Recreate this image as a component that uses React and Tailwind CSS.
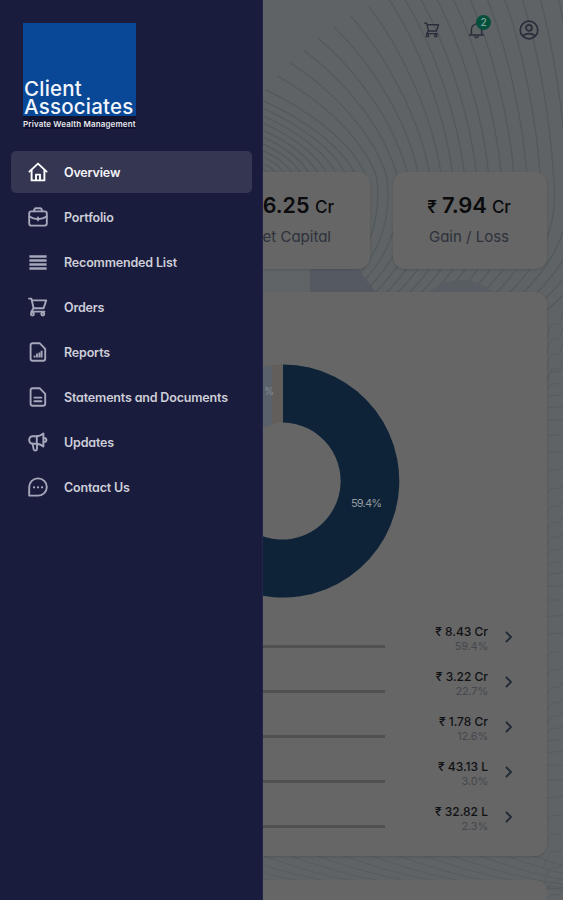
import React from "react";

const stroke = { fill: "none", stroke: "currentColor", strokeLinecap: "round", strokeLinejoin: "round" };

function Icon({ size = 20, width = 1.9, children, className = "" }) {
  return (
    <svg width={size} height={size} viewBox="0 0 20 20" strokeWidth={width} className={"shrink-0 " + className} {...stroke}>
      {children}
    </svg>
  );
}

const cartShape = (
  <>
    <path d="M1 1.6h2.4l2.2 9.6h10L18.2 3.4H4" />
    <path d="M5.6 11.2 3.4 14.6h13" />
    <circle cx="4.4" cy="17" r="1.5" />
    <circle cx="14.8" cy="17" r="1.5" />
  </>
);

const menu = [
  { label: "Overview", icon: <><path d="M1.4 9.6 10 1.6l8.6 8" /><path d="M3.6 8v10.4h12.8V8" /><path d="M8 18.2v-5.6h4v5.6" /></> },
  { label: "Portfolio", icon: <><rect x="1.2" y="4.4" width="17.6" height="14.2" rx="2" /><path d="M6 4.200c0-2 .8-3 2-3h4c1.2 0 2 1 2 3" /><path d="M1.400 9.600c2.400 1.800 5.200 2.600 8.600 2.600s6.200-.8 8.600-2.600M10 10.400v3" /></> },
  { label: "Recommended List", icon: <path d="M1.400 4.500h17.200M1.400 8.500h17.200M1.400 12.500h17.200M1.400 16.500h17.200" strokeLinecap="butt" strokeWidth="2.400" /> },
  { label: "Orders", icon: cartShape },
  { label: "Reports", icon: <><path d="M4.600 1.200h7l5.600 5.600v10q0 2-2 2H4.600q-2 0-2-2V3.200q0-2 2-2z" /><path d="M6.600 15.600v-2.200M9 15.600v-4M11.400 15.600v-5M13.600 15.600V8.800" strokeLinecap="butt" /></> },
  { label: "Statements and Documents", icon: <><path d="M4.600 1.200h7l5.600 5.600v10q0 2-2 2H4.600q-2 0-2-2V3.200q0-2 2-2z" /><path d="M6.400 10.600h7M6.400 14.200h7" /></> },
  { label: "Updates", icon: <><path d="M15.400 1.400v13.200c-2-1.900-4.300-2.900-7.400-2.900H4.600a3.400 3.400 0 0 1-3.400-3.400V7.700a3.400 3.400 0 0 1 3.400-3.400H8c3.100 0 5.400-1 7.400-2.900z" /><path d="M8.800 4.400v7.200M15.600 6c3.800 0 3.800 4 0 4M4.600 11.800l1 5.400q.4 1.400 1.600 1.400c1.400 0 1.800-.8 1.800-2v-4.600" /></> },
  { label: "Contact Us", icon: <><path d="M1.200 18.600V10a8.800 8.600 0 1 1 8.800 8.600z" /><path d="M6 10.300h.1M10 10.300h.1M14 10.300h.1" strokeWidth="2.200" /></> },
];

const holdings = [
  ["₹ 8.43 Cr", "59.4%"],
  ["₹ 3.22 Cr", "22.7%"],
  ["₹ 1.78 Cr", "12.6%"],
  ["₹ 43.13 L", "3.0%"],
  ["₹ 32.82 L", "2.3%"],
];

// Each contour is named by the x it crosses behind the cards; its start slides
// up the left edge, over the outer arc and then along the top.
function contourStart(x) {
  if (x < 100) return [-2, 175 - 0.8 * x];
  if (x < 190) {
    const t = (x - 100) / 90;
    return [-2 + 100 * t + 27 * t * t, 95 - 130 * t + 33 * t * t];
  }
  return [125 + (x - 190) * 1.33, -2];
}

const contours = Array.from({ length: 38 }, (_, i) => {
  const x = 8 + i * 7.5 + i * i * 0.11;
  const [sx, sy] = contourStart(x);
  const dx = x - sx;
  return `M${sx} ${sy}C${sx + dx * 0.45} ${sy + (175 - sy) * 0.25} ${x - dx * 0.12} ${sy + (175 - sy) * 0.65} ${x} 178C${x + 5} 225 ${x - 8} 262 ${x - 62} 310`;
});

// Slanted, slowly turning lines in the narrow strip beside the main card.
const edgeWaves = Array.from({ length: 40 }, (_, i) => {
  const y = 300 + i * 15;
  const rise = i < 4 ? 60 : 16 + Math.sin(i * 0.55) * 16;
  return `M280 ${y + rise}q6 ${-rise * 0.7} 12 ${-rise * 0.6}t12 ${-rise * 0.5}`;
});

const footWaves = Array.from({ length: 16 }, (_, i) => {
  const x = -150 + i * 27;
  return `M${x} 850q55 22 110 32t110 6`;
});

function Backdrop() {
  return (
    <svg className="absolute inset-0" width="300" height="900" viewBox="0 0 300 900" fill="none">
      <rect y="268" width="47" height="26" fill="#616467" />
      <g stroke="#53595d" strokeWidth="1.3">
        {contours.map((d, i) => <path key={i} d={d} />)}
      </g>
      <path d="M0 265h47v29H0z" fill="#616467" />
      <path d="M47 265h45l22 29H47z" fill="#555a62" />
      <path d="M166 292q32-24 64 0z" fill="#585d63" />
      <g stroke="#565c60" strokeWidth="1">
        {edgeWaves.map((d, i) => <path key={i} d={d} />)}
        {footWaves.map((d, i) => <path key={i} d={d} />)}
      </g>
    </svg>
  );
}

function Sidebar() {
  return (
    <aside className="flex w-[263px] shrink-0 flex-col border-r border-[#24254f] bg-[#1a1c3d] px-[11px] pt-[23px]">
      <div className="ml-3 w-[113px] [font-feature-settings:normal]">
        <div className="h-[93px] bg-[#084896] pl-[1px] pt-[57px] text-[20.500px] font-medium leading-[18px] text-[#f2f5fb]">
          <div className="tracking-[0.220px]">Client</div>
          <div className="tracking-[0.220px]">Associates</div>
        </div>
        <div className="h-[13px] whitespace-nowrap bg-[#12132f] pt-[3px] text-[8px] font-semibold leading-[10px] tracking-[0.140px] text-[#e6e7ee]">
          Private Wealth Management
        </div>
      </div>
      <nav className="mt-[22px] flex flex-col gap-[3px]">
        {menu.map((item, i) => (
          <a
            key={item.label}
            className={"flex h-[42px] w-[241px] items-center gap-4 rounded-[5px] pl-[17px] text-[12.500px] font-semibold tracking-[-0.170px] " + (i === 0 ? "bg-[#353651] text-[#f4f4f7]" : "text-[#cdced8]")}
          >
            <Icon className={i === 0 ? "text-white" : "text-[#a5a7ba]"}>{item.icon}</Icon>
            <span className="whitespace-nowrap pt-[2px]">{item.label}</span>
          </a>
        ))}
      </nav>
    </aside>
  );
}

function Donut() {
  return (
    <svg width="284" height="236" viewBox="0 0 284 236" className="block">
      <path d="M20 0.500A116.500 116.500 0 1 1-40 217L-9.500 168A58.500 58.500 0 1 0 20 58.500z" fill="#0e2338" />
      <path d="M20 .5Q10 .5-1 2.500V64Q9 58.500 20 58.500z" fill="#625e5b" />
      <path d="M-1 2.500H9V60.500L-1 64z" fill="#59616a" />
      <text x="11" y="31" fontSize="10" fill="#8b8d90" textAnchor="end">%</text>
      <text x="88" y="142.500" fontSize="11" fill="#969ba1" textLength="31">59.4%</text>
    </svg>
  );
}

export default function App() {
  return (
    <div className="flex h-[900px] w-[563px] overflow-hidden bg-[#5f6365] font-['Inter','Noto_Sans',sans-serif] [font-feature-settings:'cv11']">
      <Sidebar />
      <main className="relative w-[300px] shrink-0 overflow-hidden">
        <Backdrop />
        <div className="relative flex h-full flex-col">
          <header className="flex h-[60px] shrink-0 items-center justify-end pr-6 text-[#2a2e3b]">
            <Icon size={16} width={1.7} className="mr-[28px]">{cartShape}</Icon>
            <div className="relative mr-[34px]">
              <Icon size={17} width={1.700}>
                <path d="M1.800 15.200h16.400M4 15V9a6 6.500 0 0 1 12 0v6M10 2.400V1M8 17.200q2 2.200 4 0" />
              </Icon>
              <span className="absolute -top-[7px] left-[8px] flex h-[15px] w-[15px] items-center justify-center rounded-full bg-[#04503d] text-[10px] font-medium text-[#87a39b]">2</span>
            </div>
            <Icon size={20} width={1.700}>
              <circle cx="10" cy="10" r="8.800" />
              <circle cx="10" cy="7.800" r="3" />
              <path d="M3.800 15.600q6.200-4 12.400 0" />
            </Icon>
          </header>
          <section className="mt-[112px] flex shrink-0 gap-[23px]">
            <div className="flex h-[97px] w-[107px] flex-col items-end rounded-r-xl bg-[#666] pr-[36px] pt-[19px] shadow-sm">
              <div className="whitespace-nowrap text-[21.500px] font-semibold leading-[29px] text-[#0b0b0d]">6.25 <span className="text-[17px] font-medium">Cr</span></div>
              <div className="mt-[3px] whitespace-nowrap pr-[3px] text-[15px] leading-6 text-[#2d313b]">et Capital</div>
            </div>
            <div className="flex h-[97px] w-[154px] flex-col items-center rounded-xl bg-[#666] pr-[2px] pt-[19px] shadow-sm">
              <div className="whitespace-nowrap text-[22px] font-semibold leading-[29px] tracking-[-0.200px] text-[#0b0b0d]"><span className="text-[17px]">₹</span> 7.94 <span className="text-[17px] font-medium">Cr</span></div>
              <div className="mt-[3px] whitespace-nowrap text-[15px] leading-6 text-[#2d313b]">Gain / Loss</div>
            </div>
          </section>
          <section className="mt-[23px] h-[564px] w-[284px] shrink-0 rounded-r-xl bg-[#666] pt-[72px] shadow-sm">
            <Donut />
            <div className="mt-[22px] flex flex-col">
              {holdings.map(([amount, share]) => (
                <div key={amount} className="flex h-[45px] pr-[34px]">
                  <div className="mt-[23px] h-[3px] w-[122px] shrink-0 bg-[#505050]" />
                  <div className="flex flex-1 flex-col items-end pt-[3px]">
                    <span className="whitespace-nowrap text-[12px] font-medium leading-[14px] text-[#101114]">{amount}</span>
                    <span className="text-[11px] leading-[14px] tracking-[-0.200px] text-[#45484d]">{share}</span>
                  </div>
                  <svg width="8" height="12" viewBox="0 0 8 12" className="ml-[17px] mt-[9px] text-[#202936]" strokeWidth="1.800" {...stroke}>
                    <path d="m1.500 1.500 4.500 4.500-4.500 4.500" />
                  </svg>
                </div>
              ))}
            </div>
          </section>
          <section className="mt-[24px] h-[80px] w-[284px] shrink-0 rounded-tr-xl bg-[#666]" />
        </div>
      </main>
    </div>
  );
}
